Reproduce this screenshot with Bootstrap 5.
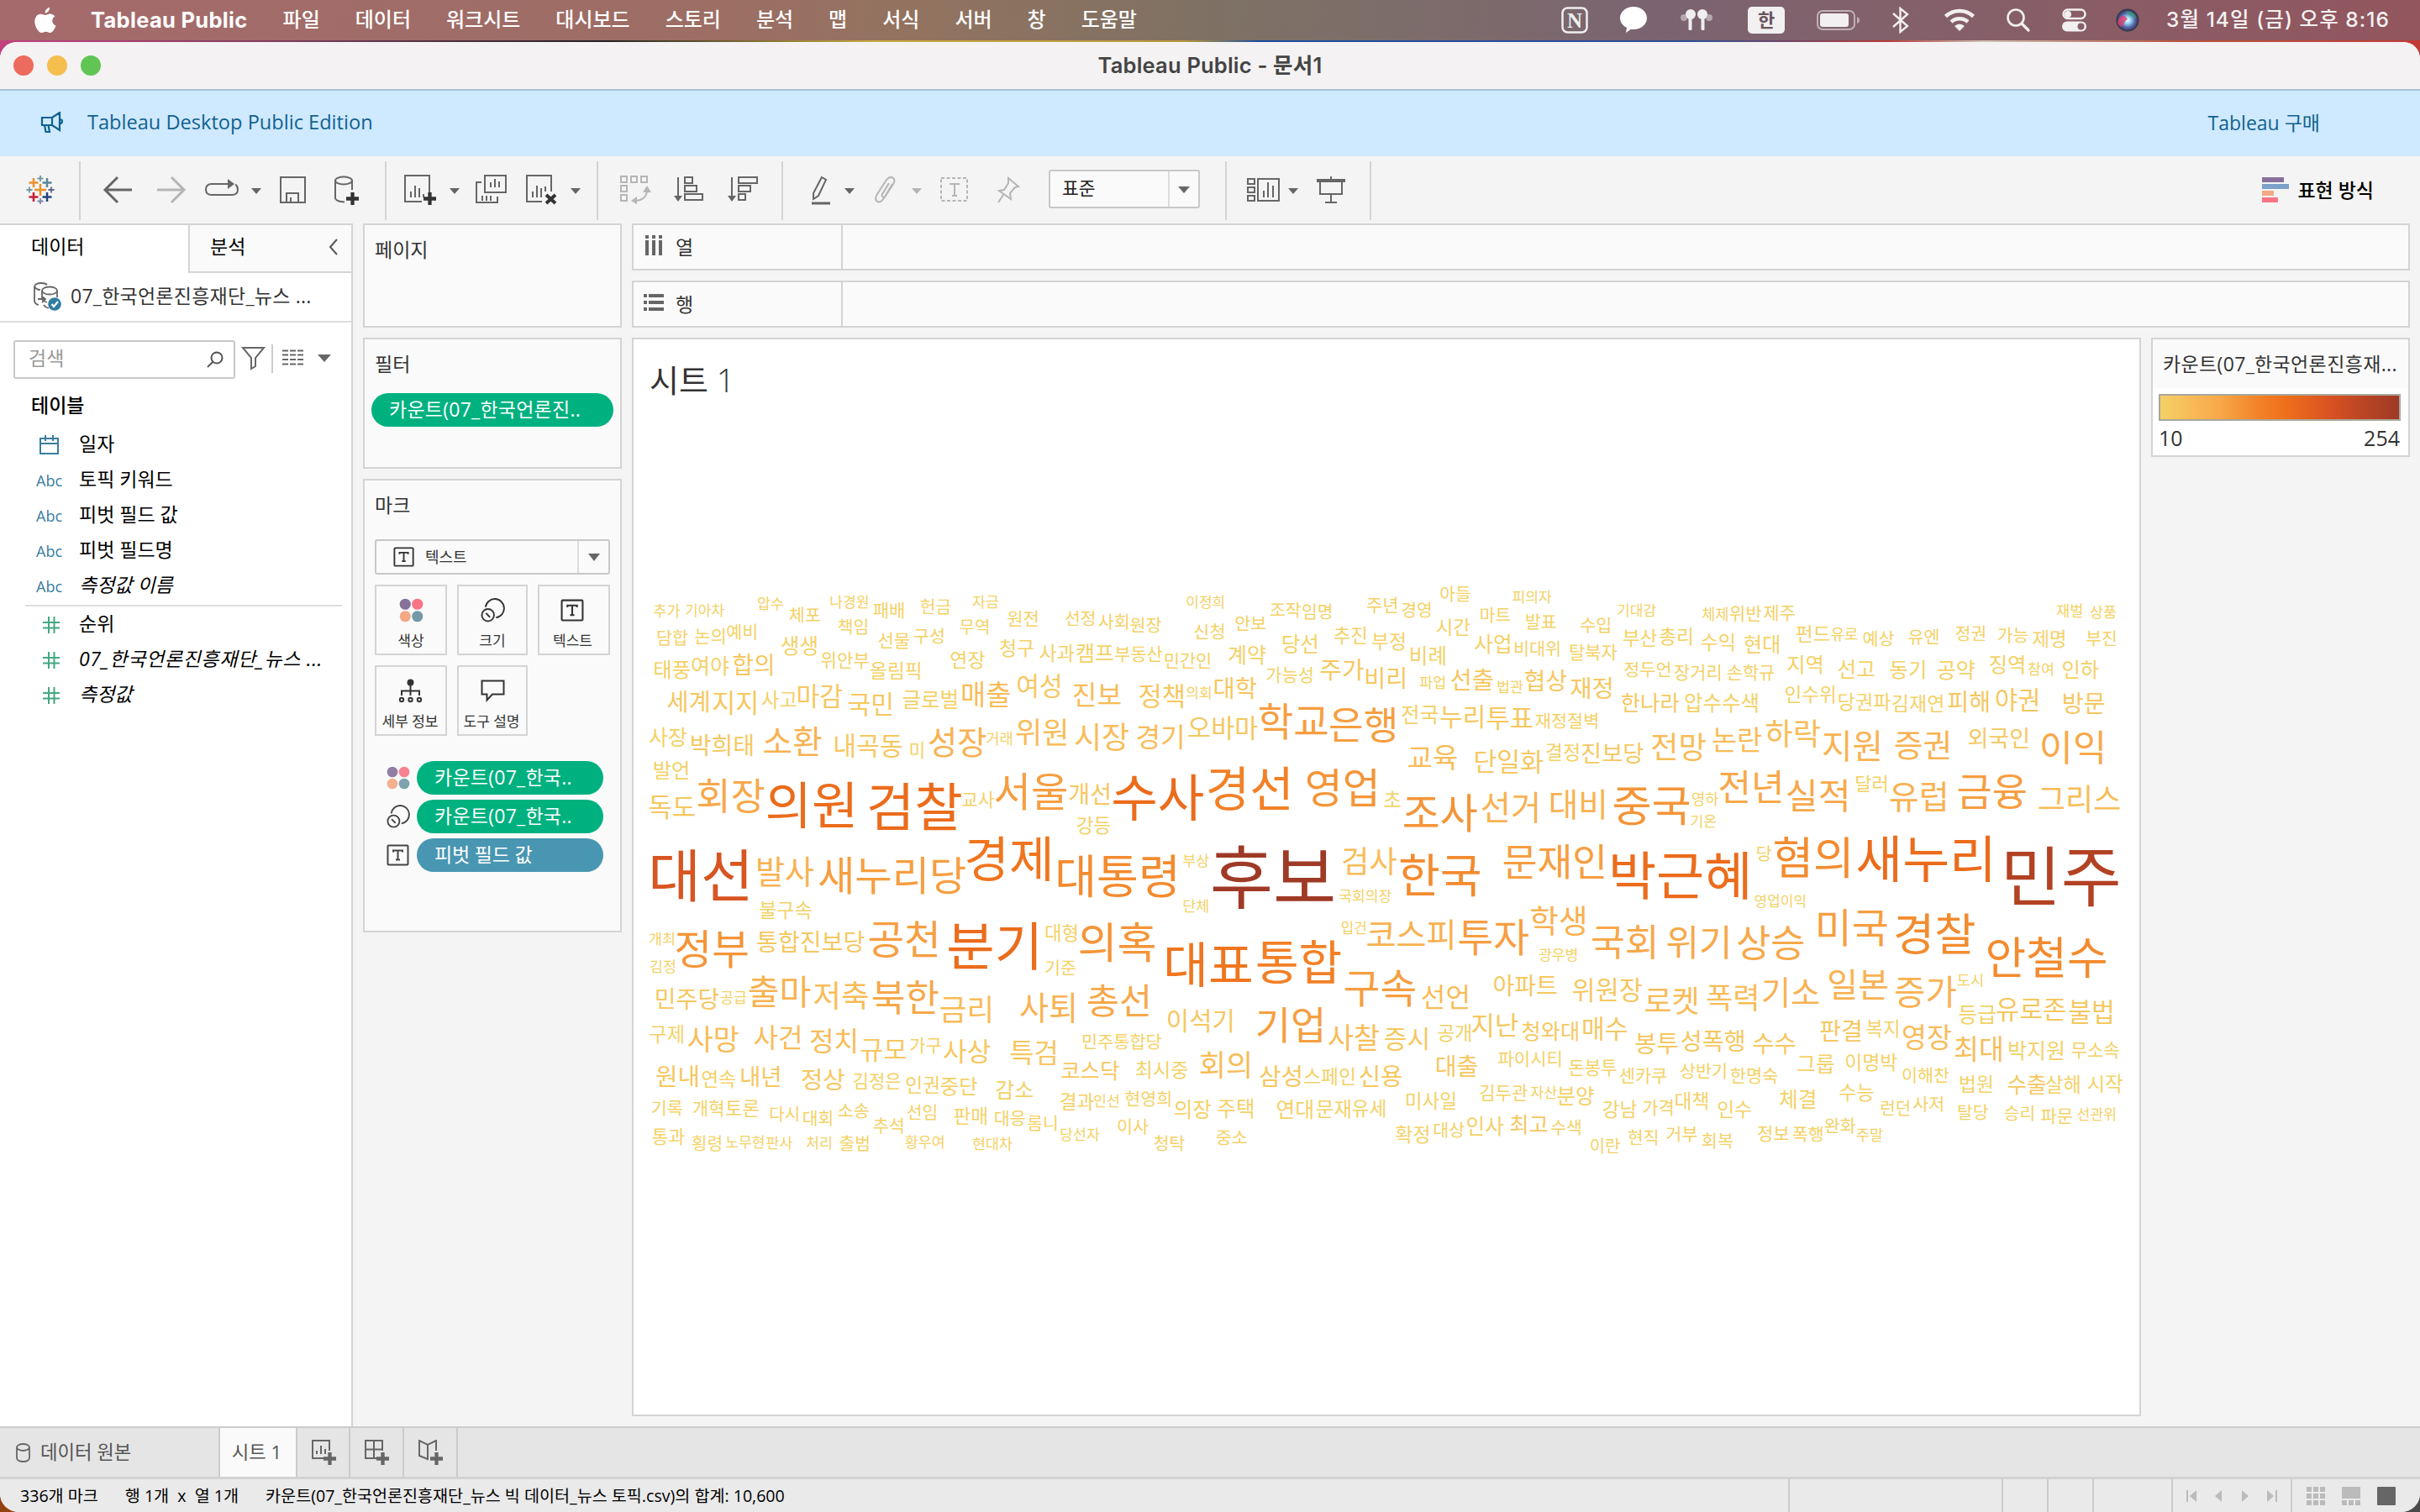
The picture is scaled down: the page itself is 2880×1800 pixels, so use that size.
<!DOCTYPE html>
<html lang="ko">
<head>
<meta charset="utf-8">
<title>Tableau Public - 문서1</title>
<link href="https://cdn.jsdelivr.net/npm/bootstrap@5.3.0/dist/css/bootstrap.min.css" rel="stylesheet">
<style>
html,body{width:2880px;height:1800px;overflow:hidden}
body{font-family:"Open Sans","Noto Sans CJK KR",sans-serif;font-size:23px;line-height:1;color:#333;background:linear-gradient(90deg,#c2417c 0,#7a3c5c 12%,#222 25%,#c9a940 36%,#b9983c 49%,#1d4c9c 52%,#2f4f94 70%,#b63a36 78%,#cfc1b4 82%,#b9533f 90%,#c03a36 100%) top/100% 900px no-repeat,linear-gradient(90deg,#94410f 0 50%,#4a4a4a 50%)}
svg{display:block;flex:none}
.sep-v{width:2px;background:#d4d4d4;flex:none;align-self:stretch}
.macbar{height:48px;background:linear-gradient(90deg,#a56a6c 0,#9c6e64 30%,#92735f 38%,#7e7164 50%,#7d6d6a 58%,#7a6470 68%,#84606a 80%,#93565e 100%);color:#fff;font-family:"Inter","Noto Sans CJK KR",sans-serif;font-size:24px;font-weight:500;padding-left:41px;padding-right:37px}
.macmenu{gap:42px}
.appname{font-size:25.5px;letter-spacing:.3px;margin-left:-1px}
.win{margin-top:2px;height:1750px;background:#f4f4f4;border-radius:20px 20px 22px 22px;overflow:hidden}
.titlebar{height:58px;background:#f4f2f3;border-bottom:2px solid #a5c2da;font-family:"Inter","Noto Sans CJK KR",sans-serif;font-size:25.5px;letter-spacing:.2px;font-weight:600;color:#444}
.dot{width:24px;height:24px;border-radius:50%}
.promo{height:78px;background:#cfe9ff;color:#0f628f;font-size:23.6px;padding:0 119px 2px 48px}
.tools{height:80px;padding:6px 0 4px;color:#666}
.box{border:2px solid #d4d4d4;background:#fafafa}
.lpane{width:420px;background:#fff;border-right:2px solid #d4d4d4;border-top:2px solid #d4d4d4}
.fieldrow{height:42px;padding:0 0 3px 43px;color:#000;white-space:nowrap}
.fieldrow .ico{width:51px;font-size:18px;color:#3a7d9f;font-family:"Open Sans";padding-top:2px}
.pcol{width:308px}
.ptitle{padding:0 12px 2px;height:60px}
.pill{height:40px;border-radius:20px;background:#00b180;color:#fff;padding:0 0 2px 21px;letter-spacing:.25px}
.pill-dim{background:#4996b2}
.combo{border:2px solid #c8c8c8;border-radius:3px;background:#fafafa}
.mk{height:84px;font-size:17px;padding-top:14px;gap:13px;color:#333}
.caret{width:0;height:0;border:7px solid transparent;border-top:9px solid #666;border-bottom:0;flex:none}
.shelf{height:56px}
.shelfname{width:249px;border-right:2px solid #d4d4d4;padding-left:14px;gap:16px}
.ramp{height:32px;border:2px solid #a9a79a;background:linear-gradient(90deg,#f4d166,#f8bc58 12%,#f8a848 25%,#f28026 42%,#ef701b 52%,#d75122 72%,#bc4623 84%,#9e3a26)}
.tabs{height:60px;background:#e5e5e5;border-top:2px solid #ccc;color:#555;font-size:22.3px}
.tabs .sep-v{background:#cbcbcb}
.stat{height:42px;background:#eaeaea;border-top:3px solid #d2d2d2;font-size:19.6px;color:#000}
.stat .sep-v{background:#cbcbcb}
.cloud text{font-family:"Noto Sans CJK KR",sans-serif;text-anchor:middle}
</style>
</head>
<body class="d-flex flex-column m-0">
<svg width="0" height="0" class="position-absolute">
<defs>
<symbol id="plus" viewBox="0 0 14 14"><path d="M5 0h4v5h5v4H9v5H5V9H0V5h5z" fill="currentColor"/></symbol>
<symbol id="tbox" viewBox="0 0 28 28"><rect x="1.5" y="2.5" width="24" height="23" rx="1" fill="none" stroke="currentColor" stroke-width="2"/><path d="M8 10.500V8.500h11v2M13.500 8.500v11M11 19.500h5" fill="none" stroke="currentColor" stroke-width="2"/></symbol>
<symbol id="dots" viewBox="0 0 30 30"><circle cx="7.500" cy="7.500" r="6.800" fill="#87719a"/><circle cx="22.500" cy="7.500" r="6.800" fill="#f97586"/><circle cx="7.500" cy="22.500" r="6.800" fill="#f3a983"/><circle cx="22.500" cy="22.500" r="6.800" fill="#7299a8"/></symbol>
<symbol id="size" viewBox="0 0 30 30"><path d="M6 11a11.500 11.500 0 1 1 13 13" fill="none" stroke="currentColor" stroke-width="2"/><circle cx="9" cy="21" r="7.500" fill="none" stroke="currentColor" stroke-width="2"/><path d="M6.500 18.500l5 5" stroke="currentColor" stroke-width="2"/></symbol>
<symbol id="hash" viewBox="0 0 20 20"><path d="M7 0v20M13.500 0v20M0 7h20M0 13.500h20" stroke="#45a883" stroke-width="2" fill="none"/></symbol>
</defs>
</svg>

<header class="macbar d-flex align-items-center justify-content-between flex-shrink-0">
  <div class="d-flex align-items-center macmenu">
    <svg width="26" height="31" viewBox="0 0 26 31" fill="#fff"><path d="M18 0c.3 3-2.400 6.600-5.300 6.600C12.300 3.700 15 .4 18 0zM13.200 9c1.200 0 3-1.700 5.600-1.600 2 .1 4.200 1 5.500 3-4.600 2.900-3.800 9.200 1.200 11.100C24.400 24.700 21.600 30 18.800 30c-2 0-2.800-1.300-5.200-1.300S10.200 30 8.500 30C4.800 30 .3 22.500.3 16.700c0-5.700 3.500-9 7-9 2.600 0 4.600 1.300 5.900 1.300z"/></svg>
    <b class="appname fw-bold">Tableau Public</b><span>파일</span><span>데이터</span><span>워크시트</span><span>대시보드</span><span>스토리</span><span>분석</span><span>맵</span><span>서식</span><span>서버</span><span>창</span><span>도움말</span>
  </div>
  <svg width="985" height="48" viewBox="1858 0 985 48">
    <rect x="1859.500" y="9.500" width="29" height="29" rx="6" fill="none" stroke="#f0eeee" stroke-width="2.500"/>
    <text x="1874" y="32.500" text-anchor="middle" font-family="Liberation Serif" font-weight="700" font-size="25" fill="#f0eeee">N</text>
    <path d="M1944 8c9 0 16 6 16 13.500S1953 35 1944 35c-1 0-2 0-3-.3l-6 4.300 1-6c-5-2.500-8-7-8-11.500C1928 14 1935 8 1944 8z" fill="#fff"/>
    <g fill="#f0eeee"><circle cx="2012" cy="17" r="6"/><circle cx="2026" cy="17" r="6"/><rect x="2009.500" y="18" width="4" height="18" rx="1.500"/><rect x="2024.500" y="18" width="4" height="18" rx="1.500"/><circle cx="2004" cy="21" r="4" opacity=".5"/><circle cx="2034" cy="21" r="4" opacity=".5"/></g>
    <rect x="2080" y="8" width="44" height="32" rx="5" fill="#f2f0f0"/><text x="2102" y="32" text-anchor="middle" font-size="22" font-weight="700" fill="#6a5560">한</text>
    <rect x="2163" y="13" width="44" height="22" rx="6" fill="none" stroke="#fff" stroke-opacity=".5" stroke-width="2"/><rect x="2166" y="16" width="34" height="16" rx="3" fill="#f2f0f0"/><path d="M2210 20q3 1 3 4t-3 4z" fill="#fff" opacity=".5"/>
    <path d="M2253 16l17 15-8.500 7V10l8.500 7-17 15" fill="none" stroke="#f2f0f0" stroke-width="2.400"/>
    <g fill="none" stroke="#f2f0f0" stroke-width="4.500"><path d="M2315.500 19.500a24 24 0 0 1 33 0"/><path d="M2322 26a15 15 0 0 1 20 0"/></g><path d="M2326 31q6-5 12 0l-6 6z" fill="#f2f0f0"/>
    <circle cx="2399" cy="21" r="9.500" fill="none" stroke="#f2f0f0" stroke-width="2.600"/><path d="M2406 28l8 8" stroke="#f2f0f0" stroke-width="3.200" stroke-linecap="round"/>
    <rect x="2455.500" y="11.500" width="26" height="10.500" rx="5.200" fill="none" stroke="#f2f0f0" stroke-width="2.500"/><circle cx="2461" cy="17" r="4" fill="#f2f0f0"/><rect x="2454" y="25.500" width="29" height="12" rx="6" fill="#f2f0f0"/><circle cx="2476.500" cy="31.500" r="4" fill="#84606a"/>
    <defs><radialGradient id="siri"><stop offset="0" stop-color="#fff"/><stop offset=".3" stop-color="#8fd5ee"/><stop offset=".65" stop-color="#5a62a8"/><stop offset="1" stop-color="#2b2f3e"/></radialGradient></defs>
    <circle cx="2532" cy="24" r="13.500" fill="url(#siri)"/><path d="M2520 27c2-9 8-11 12-4-4 2-5 8-8 9-2-1-3-3-4-5z" fill="#e0406f" opacity=".8"/><path d="M2530 14c6-1 11 2 12 8-4-2-8-3-12-8z" fill="#35a37a" opacity=".8"/>
    <text x="2578" y="32" font-size="24.500" fill="#f5f2f2" textLength="265">3월 14일 (금) 오후 8:16</text>
  </svg>
</header>

<div class="win d-flex flex-column flex-shrink-0">
  <div class="titlebar position-relative d-flex align-items-center justify-content-center flex-shrink-0">
    <div class="position-absolute start-0 d-flex ps-3" style="gap:16px"><i class="dot" style="background:#ed6a5e"></i><i class="dot" style="background:#f5bf4f"></i><i class="dot" style="background:#61c554"></i></div>
    <span>Tableau Public - 문서1</span>
  </div>
  <div class="promo d-flex align-items-center justify-content-between flex-shrink-0">
    <div class="d-flex align-items-center" style="gap:29px">
      <svg width="27" height="26" viewBox="0 0 27 26" fill="none" stroke="#0f628f" stroke-width="2.200"><path d="M2 7h12v9H2zM14 7l9-6v21l-9-6M5 16l1.500 8h4.500l-1.500-8M23 9q3 0 3 2.500T23 14"/></svg>
      <span>Tableau Desktop Public Edition</span>
    </div>
    <span style="font-size:23px">Tableau 구매</span>
  </div>

  <div class="tools d-flex flex-shrink-0">
    <svg width="1632" height="70" viewBox="0 192 1632 70" fill="none" stroke="#666" stroke-width="2">
      <g stroke-width="2.500"><path d="M48 219v14M41 226h14" stroke="#eb912b"/><path d="M40 212v11M34.500 217.500h11" stroke="#eb912b"/><path d="M56 212v11M50.500 217.500h11" stroke="#59879b"/><path d="M40 229v11M34.500 234.500h11" stroke="#c72035"/><path d="M56 229v11M50.500 234.500h11" stroke="#1f457e"/></g>
      <g stroke-width="1.800"><path d="M48 209v7M44.500 212.500h7" stroke="#7199a6"/><path d="M48 236v7M44.500 239.500h7" stroke="#7b86ad"/><path d="M35 222.500v7M31.500 226h7" stroke="#7199a6"/><path d="M61 222.500v7M57.500 226h7" stroke="#5b6591"/></g>
      <path stroke="#d4d4d4" d="M95 192v70M459 192v70M711 192v70M931 192v70M1459 192v70M1631 192v70"/>
      <path d="M140 211l-15 15 15 15M125 226h32" stroke-width="3"/>
      <path d="M204 211l15 15-15 15M219 226h-32" stroke-width="3" stroke="#b5b5b5"/>
      <path d="M274 219h-22q-7 0-7 6.500t7 6.500h24q7 0 7-6.500 0-4-3-6"/><path d="M271 213l8 6-8 6z" fill="#666" stroke="none"/>
      <path d="M334 211h29v30h-29zM341 241v-11h14v11M346 241v-6"/>
      <path d="M419 226v-12M399 214v22q1 4 11 4.500"/><ellipse cx="409" cy="215" rx="10" ry="4.500"/>
      <use href="#plus" x="412" y="229" width="15" height="15" color="#333" stroke="none"/>
      <path d="M502 240h-20v-31h29v22M489 235v-7M494 235v-14M499 235v-11M504 235v-4"/><use href="#plus" x="504" y="229" width="15" height="15" color="#333" stroke="none"/>
      <path d="M577 209h25v20h-25zM584 223v-6M589 223v-10M594 223v-7M573 217h-6v24h25v-7M574 233v6M579 233v6M584 233v6"/>
      <path d="M645 240h-18v-31h29v19M634 235v-7M639 235v-14M644 235v-11M649 228v-6"/><path d="M650 232l11 10M661 232l-11 10" stroke="#333" stroke-width="4"/>
      <g stroke="#b5b5b5"><path d="M739 210h7v7h-7zM751 210h7v7h-7zM763 210h7v7h-7zM739 221h7v7h-7zM739 232h7v7h-7zM770 226q0 12-14 13"/><path d="M770 221l5 8h-10zM751 239l7-5v9z" fill="#b5b5b5" stroke="none"/></g>
      <path d="M807 211v26M815 211h9v7h-9zM815 221h14v7h-14zM815 231h21v7h-21z"/><path d="M802 233h10l-5 7z" fill="#666" stroke="none"/>
      <path d="M871 211v26M879 211h22v7h-22zM879 221h14v7h-14zM879 231h8v7h-8z"/><path d="M866 233h10l-5 7z" fill="#666" stroke="none"/>
      <path d="M978 211l5 3-9 19-6 4v-7z"/><path d="M966 242h22" stroke-width="3"/>
      <path d="M1062 219l-10 17q-5 7-9 3-2-3 1-8l11-17q4-5 8-2 3 3 0 7l-9 14q-2 3-4 1-1-1 0-3l8-13" stroke="#b5b5b5"/>
      <rect x="1120" y="212" width="31" height="27" stroke="#b5b5b5" stroke-dasharray="4 2.500"/><path d="M1130 219h12M1136 219v14M1133 233h6" stroke="#b5b5b5"/>
      <path d="M1200 212l12 10-4 1-6 7 1 7-14-10 6-1 5-8zM1194 232l-6 9" stroke="#b5b5b5"/>
      <rect x="1249" y="203" width="178" height="44" rx="2" fill="#fafafa" stroke="#c8c8c8"/><path d="M1391 204v42" stroke="#ddd"/>
      <text x="1264" y="232" font-size="21.500" fill="#222" stroke="none">표준</text>
      <g fill="#666" stroke="none"><path d="M299 224h12l-6 7zM535 224h12l-6 7zM679 224h12l-6 7zM1005 224h12l-6 7zM1402 222h14l-7 8zM1533 224h12l-6 7z"/><path d="M1085 224h12l-6 7z" fill="#b5b5b5"/></g>
      <path d="M1485 213h8v6h-8zM1485 223h8v6h-8zM1485 233h8v6h-8zM1497 213h25v26h-25zM1504 235v-8M1509 235v-18M1515 235v-14"/>
      <path d="M1567 215h34" stroke-width="4"/><path d="M1571 216v15h26v-15M1584 210v4M1584 231v10M1577 241h14"/>
    </svg>
    <div class="d-flex align-items-center ms-auto" style="padding:0 55px 2px 0;gap:10px;font-size:23px;font-weight:500;color:#000">
      <svg width="32" height="30" viewBox="0 0 32 30"><path d="M0 0h26v6H0z" fill="#87719a"/><path d="M0 8h32v6H0z" fill="#7ba2c9"/><path d="M0 16h14v6H0z" fill="#f3a983"/><path d="M0 24h19v6H0z" fill="#f97586"/></svg>
      <span>표현 방식</span>
    </div>
  </div>

  <main class="d-flex" style="height:1432px">
    <aside class="lpane d-flex flex-column flex-shrink-0">
      <div class="d-flex" style="height:57px;color:#000">
        <div class="d-flex align-items-center" style="width:224px;padding:0 0 6px 37px">데이터</div>
        <div class="d-flex align-items-center justify-content-between flex-fill" style="border-left:2px solid #d4d4d4;border-bottom:2px solid #d4d4d4;background:#fafafa;padding:0 15px 4px 24px"><span>분석</span><svg width="12" height="20" viewBox="0 0 12 20" fill="none" stroke="#555" stroke-width="2"><path d="M10 1L2 10l8 9"/></svg></div>
      </div>
      <div class="d-flex align-items-center" style="height:59px;border-bottom:2px solid #ddd;padding:0 0 2px 40px;gap:11px">
        <svg width="33" height="34" viewBox="0 0 33 34" fill="none" stroke="#666" stroke-width="1.800"><ellipse cx="19" cy="10" rx="9" ry="4.500"/><path d="M10 10v10q2 3 6 4M28 10v8M1 5q1-4 8-4 5 0 7 2M1 5v18q1 3 5 4M1 5q2 4 7 4M5 20h8M10 17l4 3-4 4M12 27q2 3 6 4"/><circle cx="25" cy="26" r="7.800" fill="#2f7ba3" stroke="none"/><path d="M21.500 26l2.500 3 5-6" stroke="#fff" stroke-width="2.200"/></svg>
        <span style="letter-spacing:.25px">07_한국언론진흥재단_뉴스 ...</span>
      </div>
      <div class="d-flex align-items-center" style="margin:21px 0 0 16px;height:46px">
        <div class="combo d-flex align-items-center justify-content-between h-100 ps-3 pe-2" style="width:264px;color:#999;background:#fff"><span class="pb-1">검색</span><svg class="me-1" width="20" height="20" viewBox="0 0 20 20" fill="none" stroke="#555" stroke-width="2"><circle cx="12" cy="8" r="6.500"/><path d="M7.500 12.500L1 19"/></svg></div>
        <svg width="120" height="36" viewBox="280 410 120 36" fill="none" stroke="#666" stroke-width="2"><path d="M289 414h25l-10 12v10l-5 3v-13z"/><path d="M324 408v36" stroke="#ccc"/><path d="M336 417.500h25M336 422.500h25M336 428h25M336 433.500h25" stroke-dasharray="7 2" stroke-width="2.200"/><path d="M378 422h16l-8 9z" fill="#666" stroke="none"/></svg>
      </div>
      <div style="margin:20px 0 14px 37px;font-weight:500;color:#000;height:24px">테이블</div>
      <div class="fieldrow d-flex align-items-center"><span class="ico"><svg style="margin-left:4px" width="23" height="23" viewBox="0 0 23 23" fill="none" stroke="#3a7d9f" stroke-width="2"><path d="M1 4h21v18H1zM1 10h21M7 0v7M16 0v7"/></svg></span>일자</div>
      <div class="fieldrow d-flex align-items-center"><span class="ico">Abc</span>토픽 키워드</div>
      <div class="fieldrow d-flex align-items-center"><span class="ico">Abc</span>피벗 필드 값</div>
      <div class="fieldrow d-flex align-items-center"><span class="ico">Abc</span>피벗 필드명</div>
      <div class="fieldrow d-flex align-items-center"><span class="ico">Abc</span><i>측정값 이름</i></div>
      <div style="margin:1px 11px 1px 30px;border-top:2px solid #ddd"></div>
      <div class="fieldrow d-flex align-items-center"><span class="ico ps-1"><svg class="ms-1" width="20" height="20"><use href="#hash"/></svg></span>순위</div>
      <div class="fieldrow d-flex align-items-center"><span class="ico ps-1"><svg class="ms-1" width="20" height="20"><use href="#hash"/></svg></span><i style="letter-spacing:.65px">07_한국언론진흥재단_뉴스 ...</i></div>
      <div class="fieldrow d-flex align-items-center"><span class="ico ps-1"><svg class="ms-1" width="20" height="20"><use href="#hash"/></svg></span><i>측정값</i></div>
    </aside>

    <section class="pcol d-flex flex-column flex-shrink-0" style="margin-left:12px;gap:12px">
      <div class="box" style="height:124px"><div class="ptitle d-flex align-items-center">페이지</div></div>
      <div class="box" style="height:156px"><div class="ptitle d-flex align-items-center">필터</div><div class="pill d-flex align-items-center" style="margin:4px 8px">카운트(07_한국언론진..</div></div>
      <div class="box" style="height:540px">
        <div class="ptitle d-flex align-items-center">마크</div>
        <div class="combo d-flex align-items-center" style="margin:10px 12px 0;height:42px;padding-left:20px;font-size:18px">
          <svg width="26" height="26" style="margin-right:12px"><use href="#tbox"/></svg><span class="flex-fill">텍스트</span><span class="h-100 d-flex align-items-center justify-content-center" style="width:37px;border-left:2px solid #ddd"><i class="caret"></i></span>
        </div>
        <div class="d-grid text-center" style="grid-template-columns:86px 84px 86px;gap:12px;margin:12px 12px 0">
          <div class="box mk d-flex flex-column align-items-center"><svg width="29" height="29"><use href="#dots"/></svg>색상</div>
          <div class="box mk d-flex flex-column align-items-center"><svg width="29" height="29"><use href="#size"/></svg>크기</div>
          <div class="box mk d-flex flex-column align-items-center"><svg width="29" height="29" style="margin-right:3px"><use href="#tbox"/></svg><span style="margin-right:3px">텍스트</span></div>
          <div class="box mk d-flex flex-column align-items-center"><svg width="29" height="29" viewBox="0 0 29 29" fill="none" stroke="#333" stroke-width="2" style="margin-right:2px"><circle cx="14.500" cy="4.500" r="4" fill="#333" stroke="none"/><path d="M14.500 8v12M4 20v-5.500h21V20"/><circle cx="4" cy="25" r="2.200"/><circle cx="14.500" cy="25" r="2.200"/><circle cx="25" cy="25" r="2.200"/></svg><span style="margin-right:2px">세부 정보</span></div>
          <div class="box mk d-flex flex-column align-items-center"><svg width="29" height="29" viewBox="0 0 29 29" fill="none" stroke="#333" stroke-width="2"><path d="M1.500 2.500h26v16H14l-6.500 7v-7h-6z"/></svg><span style="margin-right:2px">도구 설명</span></div>
        </div>
        <div class="d-flex flex-column" style="margin:30px 20px 0 26px;gap:6px;color:#444">
          <div class="d-flex align-items-center" style="gap:8px"><svg width="28" height="28" opacity=".9"><use href="#dots"/></svg><div class="pill d-flex align-items-center flex-fill">카운트(07_한국..</div></div>
          <div class="d-flex align-items-center" style="gap:8px"><svg width="28" height="28"><use href="#size"/></svg><div class="pill d-flex align-items-center flex-fill">카운트(07_한국..</div></div>
          <div class="d-flex align-items-center" style="gap:8px"><svg width="28" height="28"><use href="#tbox"/></svg><div class="pill pill-dim d-flex align-items-center flex-fill" style="letter-spacing:-.2px">피벗 필드 값</div></div>
        </div>
      </div>
    </section>

    <section class="d-flex flex-column flex-fill" style="margin:0 12px;gap:12px">
      <div class="box shelf d-flex"><div class="shelfname d-flex align-items-center"><svg width="20" height="24" fill="#666" style="margin-top:-4px"><path d="M0 0h4v4H0zM8 0h4v4H8zM16 0h4v4h-4zM0 6h4v18H0zM8 6h4v18H8zM16 6h4v18h-4z"/></svg>열</div></div>
      <div class="box shelf d-flex"><div class="shelfname d-flex align-items-center" style="padding-left:12px"><svg width="24" height="20" fill="#666" style="margin-top:-4px"><path d="M0 0h4v4H0zM0 8h4v4H0zM0 16h4v4H0zM6 0h18v4H6zM6 8h18v4H6zM6 16h18v4H6z"/></svg><span style="margin-left:-2px">행</span></div></div>
      <div class="d-flex" style="gap:12px">
        <div class="box bg-white" style="width:1796px;height:1284px">
          <div style="font-size:38px;padding:29px 0 0 19px;height:78px;color:#333">시트<span style="font-weight:300"> 1</span></div>
          <svg class="cloud" id="cloud" width="1792" height="720" viewBox="754 682 1792 720" style="margin-top:200px"></svg>
        </div>
        <div class="box bg-white align-self-start" style="width:308px;height:142px">
          <div class="d-flex align-items-center" style="height:58px;padding-left:12px;background:#fafafa;white-space:nowrap;letter-spacing:.35px">카운트(07_한국언론진흥재...</div>
          <div class="ramp" style="margin:7px 9px 0 7px"></div>
          <div class="d-flex justify-content-between" style="margin:8px 10px 0 7px;font-size:25px"><span>10</span><span>254</span></div>
        </div>
      </div>
    </section>
  </main>

  <nav class="tabs d-flex flex-shrink-0">
    <div class="d-flex align-items-center" style="width:260px;padding-left:19px;gap:12px"><svg width="17" height="23" viewBox="0 0 17 23" fill="none" stroke="#666" stroke-width="1.800"><ellipse cx="8.500" cy="5" rx="7.500" ry="4"/><path d="M1 5v13q1 4 7.500 4T16 18V5"/></svg>데이터 원본</div>
    <div class="sep-v"></div><div class="d-flex align-items-center justify-content-center" style="width:90px;background:#fafafa;padding-right:3px">시트 1</div>
    <div class="sep-v"></div><div class="d-flex align-items-center justify-content-center" style="width:61px"><svg width="30" height="30" viewBox="0 0 30 30" fill="none" stroke="#666" stroke-width="2"><path d="M15 22H2V1h20v12M7 17v-4M12 17V7M17 17v-6"/><use href="#plus" x="15" y="15" width="15" height="15" color="#666" stroke="none"/></svg></div>
    <div class="sep-v"></div><div class="d-flex align-items-center justify-content-center" style="width:62px"><svg width="30" height="30" viewBox="0 0 30 30" fill="none" stroke="#666" stroke-width="2"><path d="M15 22H2V1h20v12M2 11.500h20M12 1v21"/><use href="#plus" x="15" y="15" width="15" height="15" color="#666" stroke="none"/></svg></div>
    <div class="sep-v"></div><div class="d-flex align-items-center justify-content-center" style="width:62px"><svg width="30" height="30" viewBox="0 0 30 30" fill="none" stroke="#666" stroke-width="2"><path d="M22 13V1l-10 5L2 1v18l10 4V6"/><use href="#plus" x="15" y="15" width="15" height="15" color="#666" stroke="none"/></svg></div>
    <div class="sep-v"></div>
  </nav>
  <footer class="stat d-flex align-items-stretch flex-shrink-0">
    <div class="d-flex align-items-center" style="padding-left:24px;gap:32px;width:2128px;white-space:pre"><span>336개 마크</span><span>행 1개  x  열 1개</span><span>카운트(07_한국언론진흥재단_뉴스 빅 데이터_뉴스 토픽.csv)의 합계: 10,600</span></div>
    <div class="sep-v" style="margin-right:252px"></div><div class="sep-v" style="margin-right:52px"></div><div class="sep-v" style="margin-right:52px"></div><div class="sep-v" style="margin-right:92px"></div><div class="sep-v"></div>
    <svg class="align-self-center" width="140" height="16" viewBox="2586 1771 140 16" fill="#bbb"><path d="M2602 1772h2v14h-2zM2614 1772v14l-8-7zM2644 1772v14l-8-7zM2668 1772v14l8-7zM2698 1772v14l8-7zM2708 1772h2v14h-2z"/></svg>
    <div class="sep-v" style="margin-right:17px"></div>
    <svg class="align-self-center" width="107" height="22" fill="#bbb"><path d="M0 0h6v6H0zM8 0h6v6H8zM16 0h6v6h-6zM0 8h6v6H0zM8 8h6v6H8zM16 8h6v6h-6zM0 16h6v6H0zM8 16h6v6H8zM16 16h6v6h-6zM42 0h22v14H42zM42 16h6v6h-6zM50 16h6v6h-6zM58 16h6v6h-6z"/><rect x="84" width="22" height="22" rx="1" fill="#666"/></svg>
  </footer>
</div>

<script src="https://cdn.jsdelivr.net/npm/bootstrap@5.3.0/dist/js/bootstrap.bundle.min.js"></script>
<script>
// Word cloud marks, grouped by quadrant: word, left, right, middle (quadrant grid units).
const quadrants = [
[760, 690, `추가 32 86 115;기아차 98 178 113;압수 248 301 90;체포 314 377 131;나경원 398 478 84;패배 488 552 112;헌금 586 648 101;자금 694 747 84;원전 766 830 143;선정 886 948 142;사회 955 1018 154;원장 1021 1084 166;이정희 1137 1216 84;조작 1311 1373 112;임명 1377 1439 118;안보 1238 1301 161;신청 1153 1216 191;담합 39 102 210;논의 118 182 204;예비 184 247 191;책임 415 477 173;무역 667 728 173;구성 572 635 204;선물 498 562 221;생생 297 372 241;위안부 380 478 292;올림픽 482 587 330;연장 648 718 288;청구 750 820 246;사과 833 903 265;캠프 909 985 265;부동산 989 1086 268;민간인 1091 1188 292;계약 1224 1300 271;당선 1335 1410 234;태풍 33 107 325;여야 111 187 312;합의 197 282 308;가능성 1303 1400 342;주가 1415 1503 326;세계 61 148 440;지지 155 248 444;사고 257 328 433;마감 330 422 420;국민 436 528 450;글로벌 549 663 433;매출 671 771 414;여성 786 878 384;진보 902 1000 414;정책 1039 1133 420;의회 1137 1189 408;대학 1194 1281 391;사장 24 100 565;박희태 109 239 596;소환 261 379 580;내곡동 406 547 596;미 563 594 611;성장 603 720 585;거래 722 776 570;위원 784 891 550;시장 906 1016 566;경기 1034 1132 564;오바마 1141 1283 534;학교 1288 1429 508;은행 1435 1573 524;주년 1511 1575 95;추진 1443 1511 203;부정 1522 1591 223;비리 1507 1593 356;발언 32 106 685;독도 23 117 815;회장 124 260 775;의원 268 452 810;검찰 478 668 815;교사 672 737 790;서울 741 888 760;개선 894 980 769;강등 910 979 882;수사 985 1169 781;경선 1181 1355 748;영업 1386 1535 747;초 1547 1581 790;부상 1130 1183 1008`],
[1640, 690, `경영 50 112 112;아들 130 192 54;피의자 280 360 66;마트 213 275 131;시간 122 191 173;발표 307 370 155;수입 421 484 166;기대감 497 577 114;체제 673 727 126;위반 731 795 125;제주 801 865 121;재벌 1408 1462 115;상품 1478 1531 120;비례 67 142 275;사업 202 277 233;비대위 283 379 250;탈북자 398 495 262;부산 509 578 213;총리 585 654 205;수익 671 741 225;현대 760 834 234;펀드 868 937 196;유로 941 995 199;예상 1007 1070 214;유엔 1101 1164 209;정권 1199 1261 197;가능 1286 1348 203;제명 1359 1427 216;부진 1470 1532 215;파업 88 141 371;선출 152 239 361;법관 248 301 385;협상 306 391 366;재정 401 488 391;정두언 512 608 324;장거리 616 713 335;손학규 725 822 335;지역 850 924 307;선고 955 1030 324;동기 1063 1137 325;공약 1161 1237 325;징역 1269 1343 307;참여 1349 1402 324;인하 1420 1494 324;한나라 506 624 443;압수수색 637 790 444;인수위 845 950 414;당권파 955 1063 438;김재연 1067 1174 444;피해 1183 1269 439;야권 1282 1372 431;방문 1421 1507 445;전국 50 125 486;누리 131 222 492;투표 227 321 498;재정절벽 328 458 509;교육 64 164 637;단일화 201 342 652;결정 349 419 618;진보당 423 550 625;전망 568 679 602;논란 695 795 575;하락 806 916 555;지원 924 1045 597;증권 1073 1188 595;외국인 1225 1351 571;이익 1375 1508 602;조사 55 204 838;선거 216 336 818;대비 357 475 807;중국 490 646 809;영하 652 706 786;기온 649 702 865;전년 709 840 745;실적 849 978 775;달러 991 1058 732;유럽 1063 1182 777;금융 1204 1344 760;그리스 1371 1539 787;당 786 816 983`],
[760, 1030, `대선 26 234 41;발사 246 362 26;새누리당 376 677 39;경제 680 858 -20;대통령 868 1120 43;후보 1192 1441 47;검사 1460 1571 -11;국회의장 1454 1561 114;불구속 252 359 162;단체 1130 1183 150;개최 23 76 265;정부 79 227 304;통합진보당 247 468 278;공천 480 624 267;분기 644 834 293;대형 844 912 246;의혹 915 1071 280;대표 1093 1271 358;통합 1284 1455 350;김정 25 78 366;기준 844 907 371;입건 1458 1510 228;코스피 1512 1694 250;민주당 36 166 482;공급 171 224 475;출마 230 355 454;저축 365 476 470;북한 487 621 477;금리 627 735 518;사퇴 793 909 513;총선 933 1062 488;이석기 1097 1235 558;기업 1283 1423 573;구속 1466 1611 443;구제 24 95 606;사망 104 207 625;사건 241 339 619;정치 357 455 630;규모 462 555 662;가구 564 628 646;사상 634 729 666;특검 772 869 673;민주통합당 921 1084 635;회의 1165 1272 717;사찰 1432 1535 619;원내 38 126 757;연속 132 201 768;내년 212 296 757;정상 339 427 770;김정은 446 544 773;인권 555 625 786;중단 628 702 791;감소 742 818 805;코스닥 878 996 738;최시중 1032 1139 733;삼성 1289 1377 758;스페인 1381 1487 757;신용 1496 1583 758;기록 28 91 871;개혁 114 178 870;토론 182 250 873;다시 273 334 894;대회 342 404 906;소송 415 478 881;추석 488 551 935;선임 558 620 887;판매 655 724 899;대응 739 802 906;롬니 808 870 924;결과 875 944 848;인선 945 998 846;현영희 1010 1106 839;의장 1112 1187 875;주택 1202 1277 872;이사 994 1057 936;연대 1324 1400 875;문재 1407 1478 875;유세 1481 1550 872;통과 30 95 973;횡령 112 174 996;노무현 182 262 991;판사 266 319 996;처리 349 402 996;출범 418 480 996;황우여 554 635 991;현대차 694 775 997;당선자 875 956 965;청탁 1070 1132 996;중소 1199 1262 977`],
[1640, 1030, `한국 47 212 38;문재인 262 473 -10;박근혜 483 772 41;혐의 823 984 -23;새누리 996 1278 -20;민주 1298 1536 44;영업이익 782 888 132;투자 169 311 260;학생 318 433 202;광우병 335 415 324;국회 445 580 279;위기 601 732 280;상승 747 883 279;미국 910 1056 227;경찰 1073 1236 250;안철수 1264 1510 333;선언 92 190 475;아파트 241 371 434;위원장 405 547 450;로켓 555 665 488;폭력 683 790 476;기소 798 915 459;일본 935 1057 430;증가 1074 1198 455;도시 1202 1256 415;등급 1206 1281 536;유로존 1284 1426 519;불법 1434 1526 528;증시 15 107 624;공개 125 195 601;지난 196 290 576;청와대 300 417 595;매수 425 517 588;판결 918 1004 596;복지 1014 1082 587;영장 1089 1188 619;봉투 535 622 639;성폭행 630 761 632;수수 779 866 640;최대 1197 1296 660;박지원 1308 1424 666;무소속 1439 1537 664;대출 121 207 722;파이시티 251 382 695;돈봉투 397 495 725;센카쿠 502 599 755;상반기 628 724 738;한명숙 732 829 755;그룹 871 946 714;이명박 970 1076 708;이해찬 1088 1184 755;법원 1206 1276 785;수출 1307 1385 788;살해 1386 1457 786;시작 1473 1544 785;미사일 58 163 846;김두관 212 310 815;자산 318 371 815;분양 373 448 828;강남 467 536 875;가격 550 614 869;대책 617 686 846;인수 705 774 875;체결 834 909 840;수능 958 1028 815;런던 1043 1104 873;사저 1111 1174 857;탈당 1203 1265 887;승리 1300 1362 888;파문 1376 1440 898;선관위 1451 1531 894;확정 38 108 965;대상 116 179 948;인사 185 260 936;최고 275 352 929;수색 360 422 940;이란 441 502 1007;현직 520 582 975;거부 599 662 965;회복 673 736 989;정보 788 852 960;폭행 861 924 965;완화 927 990 935;주말 993 1047 967`]];
const ramp = ["#f4d166","#f6c760","#f8bc58","#f8b252","#f7a84a","#f69e41","#f49538","#f38b2f","#f28026","#f0751e","#eb6c1c","#e4641e","#de5d1f","#d75521","#cf4f22","#c64a22","#bc4623","#b24223","#a83e24","#9e3a26"];
const svg = document.getElementById("cloud"), GX = 1568 / 900, GY = 3;
for (const [ox, oy, list] of quadrants) for (const item of list.split(";")) {
  const [word, l, r, m] = item.split(" ");
  const x0 = ox + l / GX, x1 = ox + r / GX, adv = (x1 - x0) / (word.length - 0.1);
  const t = Math.pow(Math.min(1, Math.max(0, (adv - 16.2) / 58.5)), 1.7);
  const size = adv / 0.92, el = document.createElementNS("http://www.w3.org/2000/svg", "text");
  el.setAttribute("x", ((x0 + x1) / 2 - 0.5).toFixed(1));
  el.setAttribute("y", (oy + m / GY + size * 0.37 - 1).toFixed(1));
  el.setAttribute("font-size", size.toFixed(1));
  el.setAttribute("fill", ramp[Math.round(t * 19)]);
  el.textContent = word;
  svg.appendChild(el);
}
</script>
</body>
</html>
